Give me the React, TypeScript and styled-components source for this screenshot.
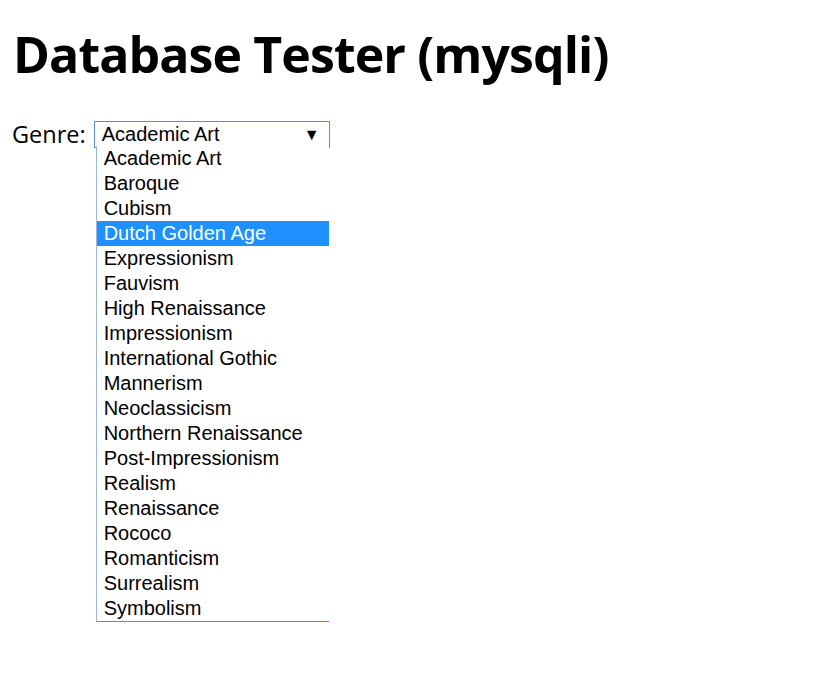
import React from "react";
import styled, { createGlobalStyle } from "styled-components";

const Global = createGlobalStyle`
  html, body { margin: 0; padding: 0; background: #fff; }
  body { padding: 10px 12px 10px 13px; font-family: "Open Sans", "Noto Sans", sans-serif; color: #000; }
`;

const Title = styled.h1`
  margin: 12px 0 0 0;
  font-family: "Open Sans", "Noto Sans", sans-serif;
  font-weight: 700;
  font-size: 50px;
  line-height: 64px;
  letter-spacing: -0.9px;
`;

const Row = styled.div`
  display: flex;
  align-items: flex-start;
  gap: 8px;
  margin: 35px 0 0 -1px;
`;

const Label = styled.label`
  font-family: "Open Sans", "Noto Sans", sans-serif;
  font-size: 23.5px;
  line-height: 26px;
`;

const SelectWrap = styled.div`
  display: flex;
  flex-direction: column;
  width: 236px;
`;

const SelectBox = styled.div`
  box-sizing: border-box;
  height: 27px;
  border: 1px solid #5f8ed8;
  display: flex;
  align-items: center;
  justify-content: space-between;
  padding: 0 9px 0 7px;
  font-family: "Liberation Sans", Arial, sans-serif;
  font-size: 20px;
`;

const Arrow = styled.span`
  font-size: 16px;
  line-height: 1;
`;

const List = styled.ul`
  margin: -2px 0 0 2px;
  width: 233px;
  box-sizing: border-box;
  padding: 0;
  list-style: none;
  border-left: 1px solid #9fb6d8;
  border-bottom: 1px solid #5f8ed8;
  background: #fff;
`;

const Item = styled.li<{ $active?: boolean }>`
  height: 25px;
  line-height: 25px;
  padding-left: 7px;
  font-family: "Liberation Sans", Arial, sans-serif;
  font-size: 20px;
  white-space: nowrap;
  background: ${(p) => (p.$active ? "#1e90ff" : "transparent")};
  color: ${(p) => (p.$active ? "#fff" : "#000")};
`;

const genres = [
  "Academic Art",
  "Baroque",
  "Cubism",
  "Dutch Golden Age",
  "Expressionism",
  "Fauvism",
  "High Renaissance",
  "Impressionism",
  "International Gothic",
  "Mannerism",
  "Neoclassicism",
  "Northern Renaissance",
  "Post-Impressionism",
  "Realism",
  "Renaissance",
  "Rococo",
  "Romanticism",
  "Surrealism",
  "Symbolism",
];

export default function App() {
  return (
    <>
      <Global />
      <Title>Database Tester (mysqli)</Title>
      <Row>
        <Label>Genre:</Label>
        <SelectWrap>
          <SelectBox>
            <span>Academic Art</span>
            <Arrow>▼</Arrow>
          </SelectBox>
          <List>
            {genres.map((g) => (
              <Item key={g} $active={g === "Dutch Golden Age"}>
                {g}
              </Item>
            ))}
          </List>
        </SelectWrap>
      </Row>
    </>
  );
}
